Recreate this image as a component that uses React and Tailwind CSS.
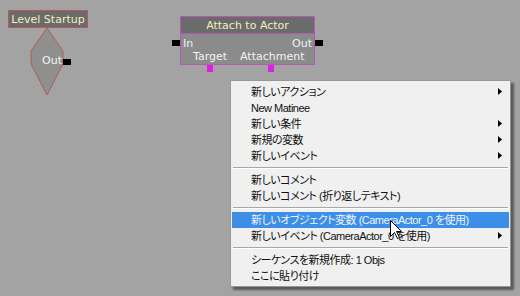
import React from "react";

const menuFont = { fontFamily: '"Liberation Sans", "Noto Sans CJK JP", sans-serif', fontFeatureSettings: '"palt"' };
const nodeFont = { fontFamily: '"DejaVu Sans", sans-serif' };

function Arrow() {
  return (
    <svg width="4" height="7" viewBox="0 0 4 7" className="absolute right-[7px] top-[4px]">
      <path d="M0 0 L4 3.5 L0 7 Z" fill="#000" />
    </svg>
  );
}

function Item({ label, sub, active }) {
  return (
    <div
      className={
        "relative h-[16px] mx-px pl-[19px] flex items-center text-[11px] tracking-[-0.5px] leading-none whitespace-nowrap " +
        (active ? "bg-[#3d8ee6] text-[#eef4ff]" : "text-[#111]")
      }
    >
      <span className="pt-px">{label}</span>
      {sub && <Arrow />}
    </div>
  );
}

function Sep() {
  return (
    <div className="h-[8px] flex flex-col justify-center px-[2px]">
      <div className="h-px bg-[#a8a8a8]" />
      <div className="h-px bg-white" />
    </div>
  );
}

export default function App() {
  return (
    <div className="relative w-[520px] h-[296px] bg-[#a3a3a3] overflow-hidden" style={nodeFont}>
      {/* Level Startup node */}
      <div className="absolute left-[8px] top-[10px] w-[80px] h-[18px] bg-[#6b6b6b] border border-[#b55a5a] flex items-center justify-center text-[11px] text-[#efefbf] leading-none">
        Level Startup
      </div>
      <svg className="absolute left-[30px] top-[27px]" width="34" height="70" viewBox="0 0 34 70">
        <polygon points="17,1 33,24 33,37 17,68 1,37 1,24" fill="#8f8f8f" stroke="#b55a5a" strokeWidth="1" />
      </svg>
      <div className="absolute left-[42px] top-[54px] text-[11px] text-[#f4f4f4] leading-[14px]">Out</div>
      <div className="absolute left-[63px] top-[59px] w-[8px] h-[6px] bg-black" />

      {/* Attach to Actor node */}
      <div className="absolute left-[180px] top-[16px] w-[135px] h-[49px] border border-[#b45ab4] bg-[#8b8b8b] flex flex-col text-[11px] leading-none">
        <div className="h-[17px] bg-[#6b6b6b] border-b border-[#b45ab4] flex items-center justify-center text-[#efefbf]">
          Attach to Actor
        </div>
        <div className="flex-1 flex flex-col px-[2px] pt-[3px] text-[#f2f2f2]">
          <div className="flex justify-between h-[13px] items-center">
            <span>In</span>
            <span>Out</span>
          </div>
          <div className="flex h-[13px] items-center pl-[10px] gap-[13px]">
            <span>Target</span>
            <span>Attachment</span>
          </div>
        </div>
      </div>
      <div className="absolute left-[172px] top-[40px] w-[8px] h-[6px] bg-black" />
      <div className="absolute left-[315px] top-[40px] w-[8px] h-[6px] bg-black" />
      <div className="absolute left-[207px] top-[65px] w-[6px] h-[7px] bg-[#e020e0]" />
      <div className="absolute left-[268px] top-[65px] w-[6px] h-[7px] bg-[#e020e0]" />

      {/* Context menu */}
      <div
        className="absolute left-[230px] top-[80px] w-[281px] bg-[#f0f0f0] border border-[#979797] pt-[3px] pb-[2px] shadow-[3px_3px_2px_rgba(0,0,0,0.45)]"
        style={menuFont}
      >
        <Item label="新しいアクション" sub />
        <Item label="New Matinee" />
        <Item label="新しい条件" sub />
        <Item label="新規の変数" sub />
        <Item label="新しいイベント" sub />
        <Sep />
        <Item label="新しいコメント" />
        <Item label="新しいコメント (折り返しテキスト)" />
        <Sep />
        <Item label="新しいオブジェクト変数 (CameraActor_0 を使用)" active />
        <Item label="新しいイベント (CameraActor_0 を使用)" sub />
        <Sep />
        <Item label="シーケンスを新規作成: 1 Objs" />
        <Item label="ここに貼り付け" />
      </div>

      {/* Mouse cursor */}
      <svg className="absolute left-[390px] top-[220px]" width="13" height="20" viewBox="0 0 13 20">
        <path d="M0.5 0.5 L0.5 16.5 L4.5 12.5 L7.5 18.5 L9.5 17.5 L6.5 11.5 L11.5 11.5 Z" fill="#fff" stroke="#000" strokeWidth="1" strokeLinejoin="miter" />
      </svg>
    </div>
  );
}
